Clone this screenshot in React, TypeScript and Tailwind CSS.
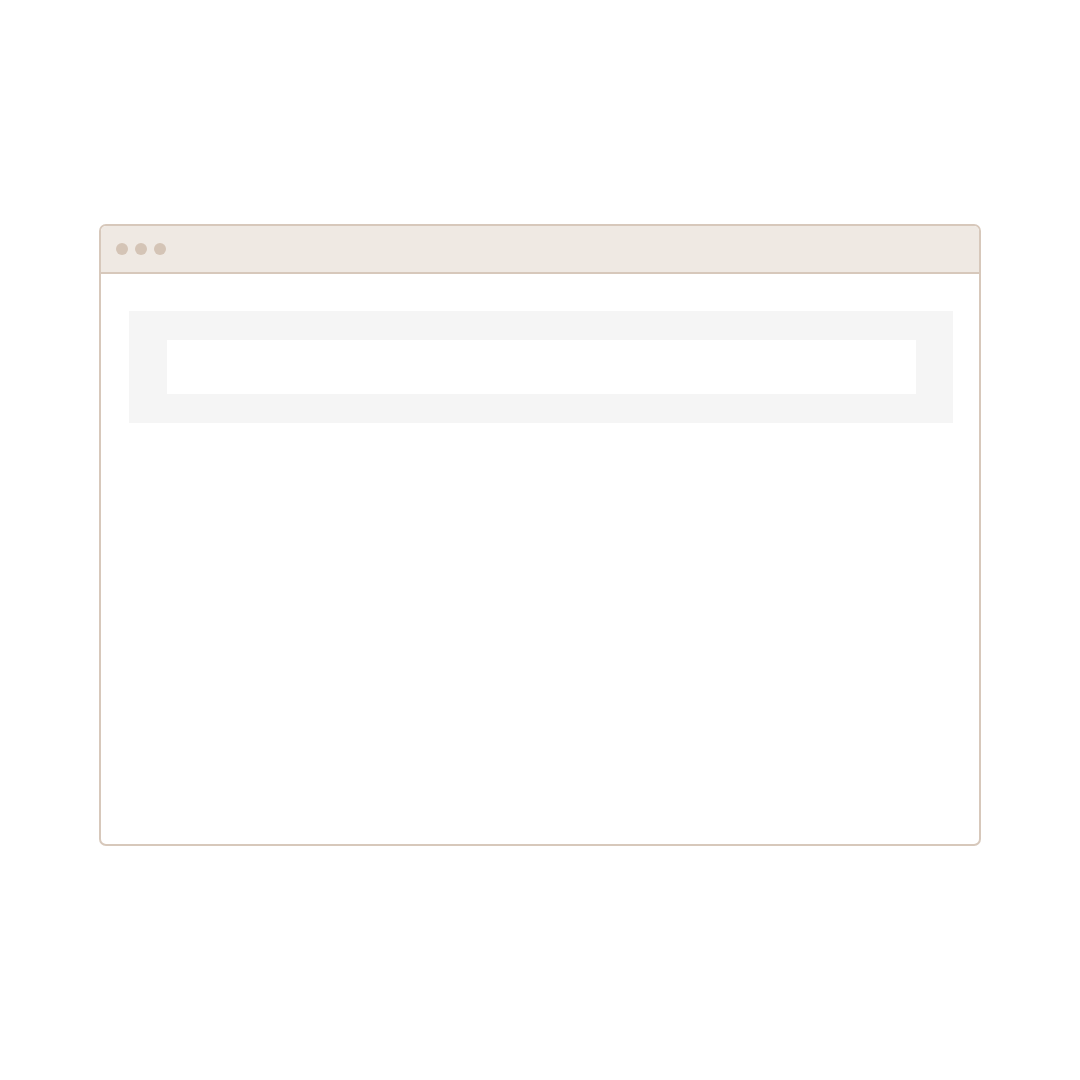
export default function App() {
  return (
    <div className="min-h-[1080px] w-full bg-white pt-[224px] font-['Liberation_Sans',sans-serif]">
      <div className="mx-auto flex h-[622px] w-[882px] flex-col overflow-hidden rounded-[7px] border-2 border-[#d7c8bb] bg-white">
        {/* Title bar */}
        <div className="flex h-[48px] shrink-0 items-center gap-[7px] border-b-2 border-[#d7c8bb] bg-[#efe9e3] pl-[15px]">
          <span className="h-[12px] w-[12px] rounded-full bg-[#d4c4b6]" />
          <span className="h-[12px] w-[12px] rounded-full bg-[#d4c4b6]" />
          <span className="h-[12px] w-[12px] rounded-full bg-[#d4c4b6]" />
        </div>

        {/* Content */}
        <div className="pl-[28px] pr-[26px] pt-[37px]">
          <div className="bg-[#f5f5f5] pl-[38px] pr-[37px] py-[29px]">
            <div className="h-[54px] bg-white" />
          </div>
        </div>
      </div>
    </div>
  );
}
